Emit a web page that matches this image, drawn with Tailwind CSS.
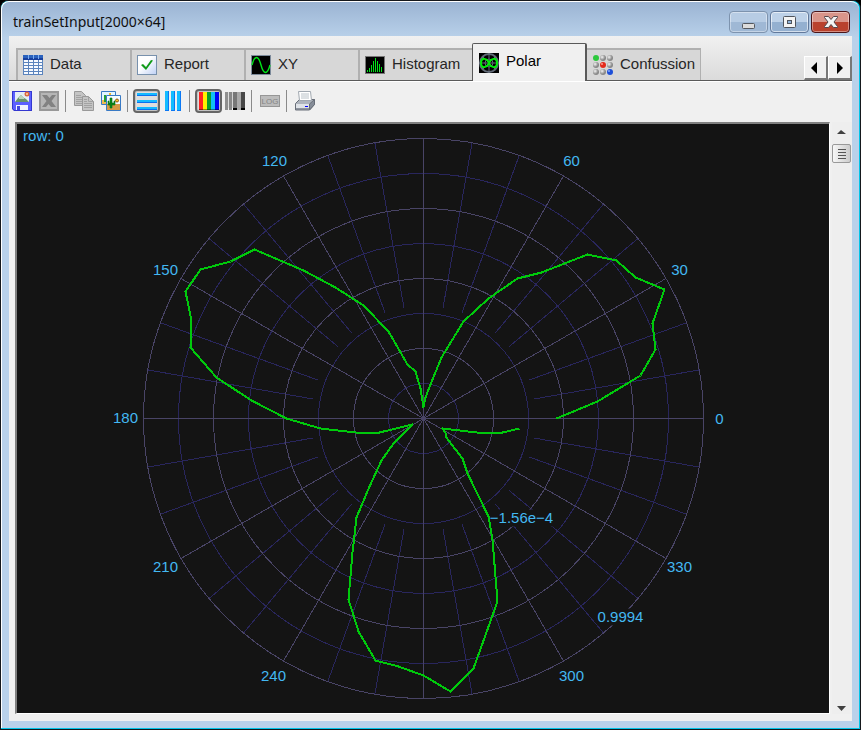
<!DOCTYPE html>
<html lang="en">
  <head>
    <meta charset="UTF-8" />
    <meta name="viewport" content="width=device-width, initial-scale=1.0" />
    <script src="https://cdn.jsdelivr.net/npm/@tailwindcss/browser@4"></script>
    <title>trainSetInput</title>
  </head>
  <body class="h-dvh bg-black font-['Liberation_Sans',Arial,sans-serif] text-[15px]">
    <!-- Window frame -->
    <div class="h-full rounded-t-lg border border-[#15181c] bg-[#00c4e8] pr-px pb-px">
      <div class="flex h-full flex-col rounded-t-lg border-t border-l border-white bg-linear-to-b from-[#9bb4d3] to-[#b9d1ea] to-[36px] px-[7px] pb-[7px]">
        <header class="flex h-[34px] shrink-0 items-start justify-between pr-0.5 pl-1">
          <h1 class="pt-2 font-['Noto_Sans','Open_Sans',sans-serif] text-[14px] leading-6 text-[#101010]">trainSetInput[2000×64]</h1>
          <div class="flex gap-0.5 pt-[9px]">
            <button aria-label="Minimize" class="flex h-[22px] w-[39px] items-center justify-center rounded-sm border border-[#7d93ae] bg-linear-to-b from-[#b7cce4] from-50% to-[#9fb8d5] to-50% inset-ring inset-ring-white/40">
              <svg class="size-4" viewBox="0 0 16 16"><rect x="1.500" y="9.500" width="12" height="5" rx="1" fill="#dcdcdc" stroke="#55595f" /></svg>
            </button>
            <button aria-label="Maximize" class="flex h-[22px] w-[39px] items-center justify-center rounded-sm border border-[#62799b] bg-linear-to-b from-[#bdd1e8] from-50% to-[#94b0d0] to-50% inset-ring inset-ring-white/60">
              <svg class="size-4" viewBox="0 0 16 16"><rect x="1.500" y="2.500" width="12" height="11" rx="1" fill="#f4f4f4" stroke="#50555d" /><rect x="5.500" y="6.500" width="4" height="3" fill="#8fb2d8" stroke="#50555d" /></svg>
            </button>
            <button aria-label="Close" class="flex h-[22px] w-[39px] items-center justify-center rounded-sm border border-[#4b1519] bg-linear-to-b from-[#d9958a] from-50% to-[#b9412d] to-50% inset-ring inset-ring-white/40">
              <svg class="h-4 w-4" viewBox="0 0 16 16"><path d="M1.500 2.500h4l2.500 3 2.500-3h4v1l-3.500 4.500 3.500 4.500v1h-4l-2.500-3-2.500 3h-4v-1l3.500-4.500-3.500-4.500z" fill="#f4f4f4" stroke="#55484c" /></svg>
            </button>
          </div>
        </header>

        <main class="flex min-h-0 grow flex-col bg-[#f0f0f0]">
          <!-- Tab strip -->
          <nav class="flex h-[46px] shrink-0 items-end border-b border-white bg-linear-to-b from-[#f1f1f1] to-[#dadada]">
            <div class="flex h-full grow items-end border-b border-[#5a5a5a] pl-[7px]" role="tablist">
              <button role="tab" class="flex h-8 w-[114px] items-center gap-[7px] border-t-2 border-l-2 border-[#b0b0b0] bg-[#d7d7d7] pl-[5px] text-[#262626]">
                <svg class="size-5" viewBox="0 0 20 20">
                  <path d="M0 0h20v20H0z" fill="#5b84bd" />
                  <path d="M0 0h20v5H0z" fill="#2a62bd" /><path d="M0 3h20v2H0z" fill="#173f9e" />
                  <path d="M1 5h4v2H1zm5 0h4v2H6zm5 0h4v2h-4zm5 0h3v2h-3zM1 8h4v2H1zm5 0h4v2H6zm5 0h4v2h-4zm5 0h3v2h-3zM1 11h4v2H1zm5 0h4v2H6zm5 0h4v2h-4zm5 0h3v2h-3zM1 14h4v2H1zm5 0h4v2H6zm5 0h4v2h-4zm5 0h3v2h-3zM1 17h4v2H1zm5 0h4v2H6zm5 0h4v2h-4zm5 0h3v2h-3z" fill="#f7faff" />
                  <path d="M5 0h1v4H5zm5 0h1v4h-1zm5 0h1v4h-1z" fill="#7cadf0" />
                </svg>
                <span class="pb-px">Data</span>
              </button>
              <button role="tab" class="flex h-8 w-[114px] items-center gap-[7px] border-t-2 border-l-2 border-[#b0b0b0] bg-[#d7d7d7] pl-[5px] text-[#262626]">
                <svg class="size-5" viewBox="0 0 20 20">
                  <defs><linearGradient id="paper" x2="1" y2="1"><stop offset=".4" stop-color="#fff" /><stop offset="1" stop-color="#bed0f5" /></linearGradient></defs>
                  <rect x=".5" y=".5" width="19" height="19" fill="url(#paper)" stroke="#7891ad" />
                  <path d="M4 10l2-1 3 3 5-7 2 .5-7 9.500z" fill="#109b18" />
                </svg>
                <span class="pb-px">Report</span>
              </button>
              <button role="tab" class="flex h-8 w-[114px] items-center gap-[7px] border-t-2 border-l-2 border-[#b0b0b0] bg-[#d7d7d7] pl-[5px] text-[#262626]">
                <svg class="size-5" viewBox="0 0 20 20">
                  <rect x=".5" y=".5" width="19" height="19" stroke="#7c8a9a" />
                  <path d="M1 10Q3 2.500 5.500 2.500T10 10t4.500 7.500T19 10" fill="none" stroke="#00e418" stroke-width="1.400" />
                </svg>
                <span class="pb-px">XY</span>
              </button>
              <button role="tab" class="flex h-8 w-[114px] items-center gap-[7px] border-t-2 border-l-2 border-[#b0b0b0] bg-[#d7d7d7] pl-[5px] text-[#262626]">
                <svg class="size-5" viewBox="0 0 20 20">
                  <rect y="1" width="20" height="18" fill="#777" /><path d="M1 2h18v16H1z" />
                  <path d="M2 15h1v2H2zm2-2h1v4H4zm2-3h1v7H6zm2-4h1v11H8zm2-3h1v14h-1zm2 3h1v11h-1zm2 3h1v8h-1zm2 3h1v5h-1z" fill="#00e418" />
                </svg>
                <span class="pb-px">Histogram</span>
              </button>
              <button role="tab" aria-selected="true" class="-mb-px flex h-[38px] w-[115px] items-center gap-[7px] rounded-t-xs border-t border-r-2 border-l border-[#595959] bg-[#f0f0f0] pl-[6px] text-black">
                <svg class="size-5" viewBox="0 0 20 20">
                  <path d="M0 0h20v20H0z" />
                  <g fill="none" stroke="#626b78"><circle cx="10" cy="10" r="9" stroke-width="2" /><circle cx="10" cy="10" r="4" /><path d="M10 0v20M0 10h20M3 3l14 14M17 3L3 17" /></g>
                  <path d="M10 10C8 5 2 4 2 10s6 5 8 0c2-5 8-6 8 0s-6 5-8 0z" fill="none" stroke="#00ed08" stroke-width="2" />
                </svg>
                <span class="pb-[3px]">Polar</span>
              </button>
              <button role="tab" class="flex h-8 w-[114px] items-center gap-[7px] border-t-2 border-r border-[#b0b0b0] bg-[#d7d7d7] pl-[6px] text-[#262626]">
                <svg class="size-5" viewBox="0 0 20 20">
                  <defs><radialGradient id="ball" cx=".35" cy=".35"><stop stop-color="#f4f4f4" /><stop offset="1" stop-color="#888" /></radialGradient></defs>
                  <g fill="url(#ball)"><circle cx="10" cy="3" r="3" /><circle cx="17" cy="3" r="3" /><circle cx="3" cy="10" r="3" /><circle cx="17" cy="10" r="3" /><circle cx="3" cy="17" r="3" /><circle cx="10" cy="17" r="3" /></g>
                  <circle cx="3" cy="3" r="3" fill="#2cc83c" /><circle cx="10" cy="10" r="3" fill="#e32a1c" /><circle cx="17" cy="17" r="3" fill="#1d4fd8" />
                  <circle cx="9" cy="9" r="1" fill="#ff9d90" /><circle cx="16" cy="16" r="1" fill="#84a8ff" />
                </svg>
                <span class="pb-px">Confussion</span>
              </button>
              <div class="ml-auto flex">
                <button aria-label="Previous tab" class="flex size-6 items-center justify-center border-t border-r-2 border-b-2 border-l border-t-white border-r-[#777] border-b-[#777] border-l-white bg-[#f0f0f0]">
                  <svg class="size-3" viewBox="0 0 12 12"><path d="M7 0v12L1 6z" /></svg>
                </button>
                <button aria-label="Next tab" class="flex size-6 items-center justify-center border-t border-r-2 border-b-2 border-l border-t-white border-r-[#777] border-b-[#777] border-l-white bg-[#f0f0f0]">
                  <svg class="size-3" viewBox="0 0 12 12"><path d="M3 0v12l6-6z" /></svg>
                </button>
              </div>
            </div>
          </nav>

          <!-- Toolbar -->
          <div class="flex h-10 shrink-0 items-center pb-0.5" role="toolbar">
            <button aria-label="Save image" class="flex h-6 w-[27px] items-center pl-[3px]">
              <svg class="size-5" viewBox="0 0 20 20">
                <path d="M0 0h20v20H2l-2-2z" fill="#3438d0" /><path d="M1 1h18v18H2.500L1 17.500z" fill="#5c60ff" />
                <path d="M3 1h14v10H3z" fill="#e4edf5" /><path d="M3 11l3-4 3-3 3 3 2 1 3 3z" fill="#68936d" /><path d="M7 6l2-2 3 3v1H7z" fill="#b9d3bc" />
                <circle cx="15" cy="3" r="2.500" fill="#d9663f" /><circle cx="15" cy="3" r="1" fill="#ffd9a8" />
                <path d="M4 14h12v5H4z" fill="#f2f4ff" /><path d="M5 15h3v4H5z" fill="#4448dc" />
              </svg>
            </button>
            <button aria-label="Export to spreadsheet" disabled class="flex h-6 w-[27px] items-center pl-[3px]">
              <svg class="size-5" viewBox="0 0 20 20">
                <path d="M0 0h20v20H0z" fill="#989898" /><path d="M2 2h16v16H2z" fill="#b6b6b6" />
                <path d="M3 4h5l2.500 3L13 4h4l-4.500 6 4.500 6h-5l-2.500-3L7 16H3l4.500-6z" fill="#828282" />
              </svg>
            </button>
            <div class="mr-[5px] ml-0.5 h-[22px] w-px bg-[#8a8a8a]"></div>
            <button aria-label="Copy" disabled class="flex h-6 w-[27px] items-center pl-[3px]">
              <svg class="size-5" viewBox="0 0 20 20">
                <path d="M.5.5h7l4 4v10H.5z" fill="#c4c4c4" stroke="#999" /><path d="M2 4.500h5M2 6.500h7M2 8.500h7M2 10.500h7M2 12.500h7" stroke="#a2a2a2" />
                <path d="M8.500 5.500h6l5 5v9h-11z" fill="#c4c4c4" stroke="#999" /><path d="M14.500 5.500v5h5M10 8.500h3M10 10.500h3M10 12.500h8M10 14.500h8M10 16.500h8" fill="none" stroke="#a2a2a2" />
              </svg>
            </button>
            <button aria-label="Copy picture" class="flex h-6 w-[27px] items-center pl-[3px]">
              <svg class="size-5" viewBox="0 0 20 20">
                <path d="M.5.5h14v13H.5z" fill="#e2f5ff" stroke="#397ac5" /><path d="M1 9h13v4H1z" fill="#efb955" /><path d="M3 4h2v7H3z" fill="#25a030" /><path d="M8 2h2v3H8z" fill="#f4b62a" />
                <path d="M5.500 4.500h14v15h-14z" fill="#f4fbff" stroke="#397ac5" /><path d="M6 13h13v6H6z" fill="#d79a45" />
                <path d="M9 7h2v10H9zM7 10h1v2h5v-2h1v4H7z" fill="#0c8a1c" stroke="#087015" stroke-width=".6" /><circle cx="16" cy="9.500" r="1.500" fill="#ffc82a" stroke="#8a5514" />
              </svg>
            </button>
            <div class="mr-[5px] ml-0.5 h-[22px] w-px bg-[#8a8a8a]"></div>
            <button aria-label="Rows" aria-pressed="true" class="flex h-6 w-[27px] items-center rounded-sm border-2 border-[#666] bg-[#dedede] pl-0.5 inset-ring inset-ring-[#c2c2c2]">
              <svg class="h-[18px] w-5 shrink-0" viewBox="0 0 20 18"><path d="M0 1h20v3H0zm0 7h20v3H0zm0 7h20v3H0z" fill="#0b70f0" /><path d="M0 1h20v2H0zm0 7h20v2H0zm0 7h20v2H0z" fill="#14b9ff" /></svg>
            </button>
            <button aria-label="Columns" class="flex h-6 w-[27px] items-center pl-[5px]">
              <svg class="h-5 w-4" viewBox="0 0 16 20"><path d="M0 0h4v20H0zm6 0h4v20H6zm6 0h4v20h-4z" fill="#0b78f4" /><path d="M0 0h3v19H0zm6 0h3v19H6zm6 0h3v19h-3z" fill="#14bcff" /></svg>
            </button>
            <div class="mr-[5px] ml-0.5 h-[22px] w-px bg-[#8a8a8a]"></div>
            <button aria-label="Colour" aria-pressed="true" class="flex h-6 w-[27px] items-center rounded-sm border-2 border-[#666] bg-[#dedede] pl-0.5 inset-ring inset-ring-[#c2c2c2]">
              <svg class="h-[18px] w-5 shrink-0" viewBox="0 0 20 18"><path d="M0 0h4v18H0z" fill="#f22" /><path d="M4 0h4v18H4z" fill="#fff000" /><path d="M8 0h4v18H8z" fill="#0a9c2c" /><path d="M12 0h4v18h-4z" fill="#10bdf7" /><path d="M16 0h4v18h-4z" fill="#0000f4" /><path d="M0 17h20v1H0z" fill="#000" opacity=".4" /></svg>
            </button>
            <button aria-label="Grayscale" class="flex h-6 w-[27px] items-center pl-[3px]">
              <svg class="size-5" viewBox="0 0 20 20"><path d="M0 1h3v18H0z" fill="#909090" /><path d="M3 1h1v16H3z" fill="#ddd" /><path d="M4 1h3v18H4z" fill="#888" /><path d="M7 1h1v16H7z" fill="#d3d3d3" /><path d="M8 1h4v18H8z" fill="#777" /><path d="M12 1h4v18h-4z" fill="#a9a9a9" /><path d="M16 1h4v18h-4z" fill="#484848" /><path d="M8 17h4v2H8zm8 0h4v2h-4z" /></svg>
            </button>
            <div class="mr-[5px] ml-0.5 h-[22px] w-px bg-[#8a8a8a]"></div>
            <button aria-label="Logarithmic scale" disabled class="flex h-6 w-[27px] items-center pl-[3px]">
              <span class="flex h-3 w-5 items-end justify-center border border-[#969696] bg-[#bcbcbc] text-[8px] leading-[9px] text-[#858585]">LOG</span>
            </button>
            <div class="mr-[5px] ml-0.5 h-[22px] w-px bg-[#8a8a8a]"></div>
            <button aria-label="Print" class="flex h-6 w-[27px] items-center pl-[3px]">
              <svg class="size-5" viewBox="0 0 20 20">
                <path d="M.5 12.500l4-4h15v5l-5 5.500H.5z" fill="#aeb4bd" stroke="#686e78" /><path d="M14.500 13l5-4.500v5l-5 5.500z" fill="#868d98" stroke="#686e78" />
                <path d="M3.500.5h12l1 9h-12z" fill="#fff" stroke="#a1a8b0" /><path d="M6 3h8M6 5h8M6 7h8" stroke="#bac2c8" />
                <path d="M1 13h13v4H1z" fill="#dfe3e8" /><path d="M1 18h13" stroke="#737983" /><path d="M10 15h3v1h-3z" fill="#00f" />
              </svg>
            </button>
          </div>

          <div class="flex min-h-0 grow pb-[7px] pl-1.5">
            <!-- Polar plot, origin at the pole -->
            <div class="min-w-0 grow border-t-2 border-r border-b border-l-2 border-t-[#808080] border-r-white border-b-white border-l-[#808080] bg-[#141414]">
              <svg class="h-full w-full" viewBox="-406.500 -294.500 812 589" role="img" aria-label="Polar plot of row 0">
                <g fill="none" stroke="#29265d" shape-rendering="crispEdges">
                  <circle r="35" /><circle r="105" /><circle r="175" /><circle r="245" />
                  <g id="minor-rays"></g>
                </g>
                <g fill="none" stroke="#494466" shape-rendering="crispEdges">
                  <circle r="70" /><circle r="140" /><circle r="210" /><circle r="280" />
                  <g id="major-rays"></g>
                </g>
                <path d="M66 91h66v17H66zM174 190h48v17h-48z" fill="#141414" />
                <polyline fill="none" stroke="#00c90c" stroke-width="2" stroke-linejoin="round" shape-rendering="crispEdges" points="133,0 174,-17 217,-43 232,-69 229,-95 241,-129 212,-141 193,-158 164,-164 118,-146 94,-140 65,-120 40,-97 18,-61 7,-34 2,-21 0,-11 -3,-30 -8,-47 -16,-54 -35,-87 -60,-113 -88,-131 -120,-148 -169,-169 -193,-157 -223,-149 -238,-127 -232,-98 -233,-71 -207,-41 -172,-18 -137,0 -103,10 -68,14 -44,14 -11,6 -30,25 -42,42 -54,68 -67,99 -71,134 -75,181 -65,213 -48,242 -25,248 0,257 27,273 50,250 74,183 69,121 65,98 44,55 39,40 22,18 22,14 19,10 53,14 79,14 96,10" />
                <g fill="#43b8f2" font-size="15" text-anchor="middle">
                  <text x="-380" y="-278">row: 0</text>
                  <text x="296" y="5">0</text><text x="256" y="-144">30</text><text x="148" y="-253">60</text>
                  <text x="-149" y="-253">120</text><text x="-258" y="-144">150</text><text x="-298" y="4">180</text>
                  <text x="-258" y="153">210</text><text x="-150" y="262">240</text><text x="148" y="262">300</text>
                  <text x="256" y="153">330</text><text x="98" y="104">−1.56e−4</text><text x="197" y="203">0.9994</text>
                </g>
              </svg>
            </div>
            <!-- Vertical scroll bar -->
            <div class="ml-0.5 flex w-5 shrink-0 flex-col items-center bg-[#eeeeee] pt-2">
              <svg class="h-[14px] w-2.5 shrink-0" viewBox="0 0 10 14"><path d="M0 4l4-4 5 4z" fill="#404040" /></svg>
              <button aria-label="Scroll" class="flex h-[19px] w-[19px] shrink-0 flex-col items-center justify-center gap-0.5 self-start rounded-xs border border-[#999] bg-linear-to-r from-[#f7f7f7] to-[#ccc]">
                <span class="h-px w-2 bg-[#555]"></span><span class="h-px w-2 bg-[#555]"></span><span class="h-px w-2 bg-[#555]"></span><span class="h-px w-2 bg-[#555]"></span>
              </button>
              <svg class="mt-auto h-2.5 w-2.5 shrink-0" viewBox="0 0 10 10"><path d="M0 2h9L4.500 7z" fill="#404040" /></svg>
            </div>
          </div>
        </main>
      </div>
    </div>
    <script>
      // every 30 degrees a full ray, in between short ones that skip the centre
      function addRay(groupId, degrees, from, to) {
        const line = document.createElementNS("http://www.w3.org/2000/svg", "line");
        const angle = (degrees * Math.PI) / 180;
        line.setAttribute("x1", from * Math.cos(angle));
        line.setAttribute("y1", -from * Math.sin(angle));
        line.setAttribute("x2", to * Math.cos(angle));
        line.setAttribute("y2", -to * Math.sin(angle));
        document.getElementById(groupId).appendChild(line);
      }
      for (let degrees = 0; degrees < 360; degrees += 10) {
        if (degrees % 30 === 0) addRay("major-rays", degrees, 0, 280);
        else addRay("minor-rays", degrees, 112, 280);
      }
    </script>
  </body>
</html>
